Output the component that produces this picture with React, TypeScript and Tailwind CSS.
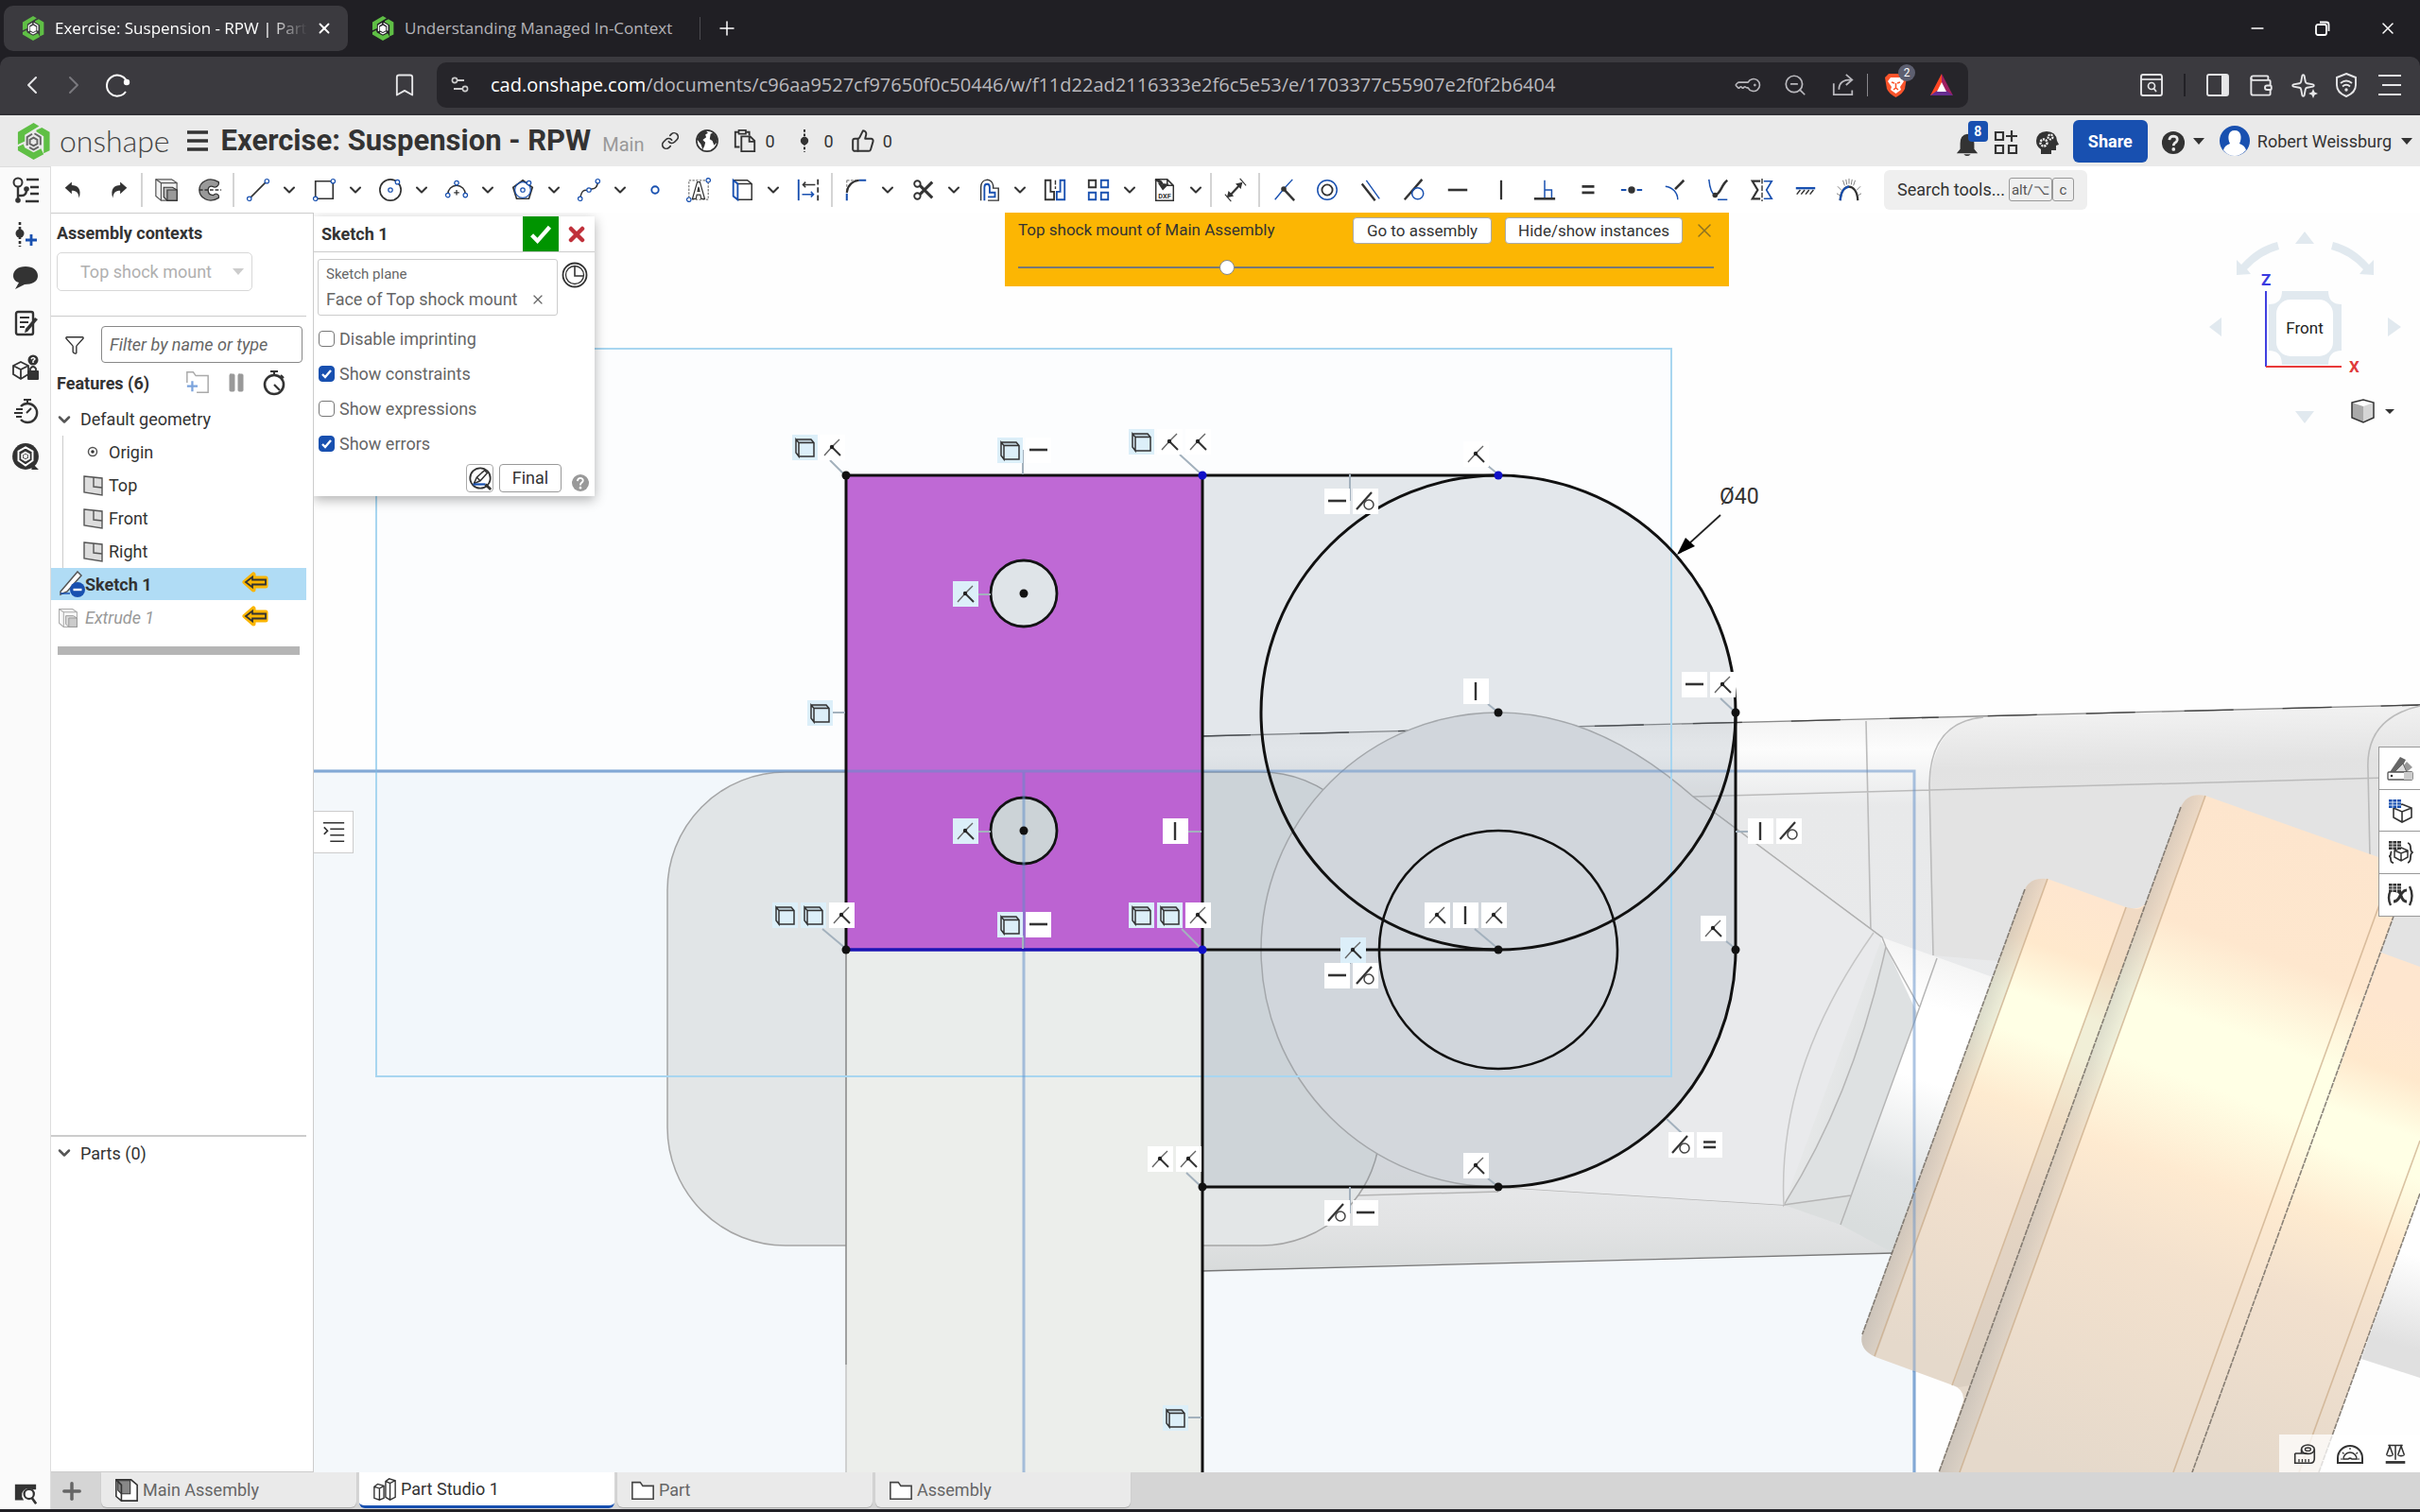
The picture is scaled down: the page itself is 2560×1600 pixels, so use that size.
import React from 'react';
import {
  Bookmark,
  ChevronDown,
  ChevronLeft,
  ChevronRight,
  Filter,
  KeyRound,
  Link as LinkIcon,
  Minus,
  Pause,
  Plus,
  Sparkle,
  ThumbsUp,
  Wallet,
  X,
  ZoomOut,
} from 'lucide-react';

const K = '#333333';
const B = '#1850b0';

const Svg: React.FC<{ s?: number; vb?: string; className?: string; children: React.ReactNode }> = ({
  s = 28,
  vb = '0 0 28 28',
  className,
  children,
}) => (
  <svg width={s} height={s} viewBox={vb} fill="none" className={className} aria-hidden="true">
    {children}
  </svg>
);

const Dot = ({ x, y }: { x: number; y: number }) => (
  <circle cx={x} cy={y} r="2.4" fill="#fff" stroke={B} strokeWidth="1.3" />
);

const Logo = ({ s = 24, inner = '#666' }: { s?: number; inner?: string }) => (
  <Svg s={s} vb="0 0 40 40">
    <path d="M20 0 L26 3.500 L10.500 13 V20 L3 23.500 V10 Z" fill="#5fbf45" />
    <path d="M29 5 L37.500 10 V30 L31 33 V14.500 L23 9.500 V8 Z" fill="#5fbf45" />
    <path d="M3 26 L9 23 L10.500 27 L20 32 L28 28 L31 34 L20 40 L3 30 Z" fill="#5fbf45" />
    <path
      d="M21 11.500 L27.500 15.500 V24 M25.500 26 L20 29 L15.500 26.500 M13 24.500 V15.500 L18.500 12"
      stroke={inner}
      strokeWidth="2"
    />
    <path d="M20 16 L24 18.300 V22.700 L20 25 L16 22.700 V18.300 Z" stroke={inner} strokeWidth="2" fill={inner === '#fff' ? '#fff' : 'none'} />
  </Svg>
);

const Caret = ({ className = 'text-[#333]' }: { className?: string }) => (
  <svg width="12" height="7" viewBox="0 0 12 7" className={className} aria-hidden="true">
    <path d="M0 0 H12 L6 7 Z" fill="currentColor" />
  </svg>
);

const icons: Record<string, React.ReactNode> = {
  undo: <path d="M1 11 L11 2 V7 C20 7 26 13 22 26 C21 18 18 15 11 15 V20 Z" fill={K} />,
  redo: <path d="M27 11 L17 2 V7 C8 7 2 13 6 26 C7 18 10 15 17 15 V20 Z" fill={K} />,
  extrude: (
    <>
      <path d="M2 2 H20 L26 6 V26 H8 L2 21 Z" fill="#f2f2f2" stroke="#555" strokeWidth="1.300" />
      <path d="M2 2 L8 6 H26 M8 6 V26" stroke="#555" strokeWidth="1.300" />
      <path d="M11 11 H21 L26 14 V26 H15 L11 22 Z" fill="#bbb" stroke={K} strokeWidth="1.200" />
      <path d="M15 14 H26 V26 H15 Z" fill="#999" stroke={K} strokeWidth="1.200" />
    </>
  ),
  revolve: (
    <>
      <path
        d="M24 5 C13 -2 2 5 2 14 C2 23 13 30 24 23 C25 19 21 17 18 20 C13 20 12 17 12 14 C12 11 14 9 17 10 C20 12 25 10 24 5 Z"
        fill="#999"
        stroke={K}
        strokeWidth="1.400"
      />
      <path d="M2 14 H27" stroke={K} strokeWidth="1.500" strokeDasharray="4 2" />
    </>
  ),
  line: (
    <>
      <path d="M5 23 L23 5" stroke={K} strokeWidth="1.800" />
      <Dot x={4} y={24} />
      <Dot x={24} y={4} />
    </>
  ),
  rect: (
    <>
      <path d="M4 4 H24 V24 H4 Z" stroke={K} strokeWidth="1.800" />
      <Dot x={4} y={24} />
      <Dot x={24} y={4} />
    </>
  ),
  circle: (
    <>
      <circle cx="14" cy="14" r="12" stroke={K} strokeWidth="1.800" />
      <Dot x={14} y={14} />
      <Dot x={22} y={5} />
    </>
  ),
  arc: (
    <>
      <path d="M4 19 A10 10 0 0 1 24 19" stroke={K} strokeWidth="1.600" />
      <path d="M14 14 V20 M11 17 H17" stroke={K} strokeWidth="1.400" />
      <Dot x={14} y={6} />
      <Dot x={4} y={20} />
      <Dot x={24} y={20} />
    </>
  ),
  polygon: (
    <>
      <path d="M14 3 L25 11 L21 24 H7 L3 11 Z" stroke={K} strokeWidth="1.800" />
      <circle cx="14" cy="14" r="9" stroke={B} strokeWidth="1.300" />
      <Dot x={14} y={14} />
      <Dot x={21} y={6} />
    </>
  ),
  spline: (
    <>
      <path d="M4 24 C6 10 12 16 14 14 C18 12 24 14 24 4" stroke={K} strokeWidth="1.600" />
      <Dot x={4} y={24} />
      <Dot x={14} y={14} />
      <Dot x={24} y={4} />
    </>
  ),
  point: <circle cx="14" cy="14" r="4" stroke={B} strokeWidth="2" />,
  text: (
    <>
      <path d="M3 3 H25 V25 H3 Z" stroke="#777" strokeWidth="1.300" strokeDasharray="2.500 1.500" />
      <path
        d="M7 24 L12.500 5 H15.500 L21 24 H17 L16 19.500 H12 L11 24 Z M13 15.500 H15 L14 10.500 Z"
        stroke={K}
        strokeWidth="1.300"
      />
      <Dot x={25} y={3} />
      <Dot x={3} y={25} />
    </>
  ),
  use: (
    <>
      <path d="M4 3 H20 L25 7 V25 H9 L4 21 Z M9 7 H25 M4 3 L9 7" stroke={K} strokeWidth="1.600" />
      <path d="M4 3 L9 7 V25 L4 21 Z" stroke={B} strokeWidth="2" fill="#fff" />
    </>
  ),
  construct: (
    <>
      <path d="M3 2 V26" stroke={B} strokeWidth="2" />
      <path d="M25 2 V8 M25 11 V17 M25 20 V26" stroke={K} strokeWidth="2" />
      <path d="M8 8 H22 M11 5 L8 8 L11 11" stroke={K} strokeWidth="1.600" />
      <path d="M7 19 H20 M17 16 L20 19 L17 22" stroke={B} strokeWidth="1.600" />
    </>
  ),
  fillet: (
    <>
      <path d="M3 3 H14 M3 3 V14" stroke="#888" strokeWidth="1.300" strokeDasharray="3 1.500" />
      <path d="M3 17 C4 9 9 4 17 3" stroke={K} strokeWidth="2.300" />
      <path d="M17 3 H25 M3 18 V26" stroke={B} strokeWidth="2.200" />
    </>
  ),
  trim: (
    <>
      <circle cx="8" cy="7" r="3.500" stroke={K} strokeWidth="2" />
      <circle cx="8" cy="21" r="3.500" stroke={K} strokeWidth="2" />
      <path d="M11 9 L25 23 M11 19 L25 5" stroke={K} strokeWidth="3.200" />
    </>
  ),
  offset: (
    <>
      <path d="M5 26 V11 C5 0 18 0 19 9 V12 H25 V26 H13" stroke={K} strokeWidth="1.500" />
      <path d="M9 26 V11 C9 6 15 6 15 11 V17 H21 V22 H13" stroke={B} strokeWidth="2" />
    </>
  ),
  mirror: (
    <>
      <path d="M3 3 H9 V16 H13 V25 H3 Z" stroke={K} strokeWidth="2" />
      <path d="M25 3 H20 V16 H16 V25 H25 Z" stroke={B} strokeWidth="2" />
      <path d="M14.500 3 V13" stroke={K} strokeWidth="1.500" strokeDasharray="5 2" />
    </>
  ),
  pattern: (
    <>
      <path d="M3 3 H11 V11 H3 Z" stroke={K} strokeWidth="2" />
      <path d="M17 3 H25 V11 H17 Z M3 17 H11 V25 H3 Z M17 17 H25 V25 H17 Z" stroke={B} strokeWidth="2" />
    </>
  ),
  dxf: (
    <>
      <path d="M4 2 H17 L24 9 V26 H4 Z M17 2 V9 H24" stroke={K} strokeWidth="1.600" />
      <path d="M3 3 C9 2 12 5 12 9 M8 7 L12 13 L17 8 Z" stroke={K} strokeWidth="1.800" fill={K} />
      <text x="14" y="23.500" textAnchor="middle" fontSize="8" fontWeight="700" fill={K} fontFamily="Roboto, sans-serif">
        DXF
      </text>
    </>
  ),
  dimension: (
    <>
      <path d="M8 20 L19 8" stroke={K} strokeWidth="2.400" />
      <path d="M4 23 L6 15 L12 21 Z M22 5 L20 13 L14 7 Z" fill={K} />
      <path d="M2 19 L9 27 M19 1 L26 9" stroke={K} strokeWidth="1.200" />
    </>
  ),
  coincident: (
    <>
      <path d="M24 2 L14 13 L4 25" stroke={B} strokeWidth="1.500" />
      <path d="M14 13 L26 26" stroke={K} strokeWidth="2.600" />
      <circle cx="14" cy="13" r="3" fill={K} />
    </>
  ),
  concentric: (
    <>
      <circle cx="14" cy="14" r="11" stroke={B} strokeWidth="1.600" />
      <circle cx="14" cy="14" r="6" stroke={K} strokeWidth="2" />
    </>
  ),
  parallel: (
    <>
      <path d="M9 3 L24 24" stroke={B} strokeWidth="1.500" />
      <path d="M4 7 L19 26" stroke={K} strokeWidth="2.600" />
    </>
  ),
  tangent: (
    <>
      <path d="M3 25 L23 2" stroke={K} strokeWidth="2.600" />
      <circle cx="18" cy="18" r="6.500" stroke={B} strokeWidth="1.600" />
    </>
  ),
  horizontal: <path d="M3 14 H25" stroke={K} strokeWidth="2.800" />,
  vertical: <path d="M14 3 V25" stroke={K} strokeWidth="2.400" />,
  perpendicular: (
    <>
      <path d="M14 3 V24 M14 14 H22 V24" stroke={B} strokeWidth="1.600" />
      <path d="M2 24 H26" stroke={K} strokeWidth="2.800" />
    </>
  ),
  equal: <path d="M7 10 H21 M7 17 H21" stroke={K} strokeWidth="3" />,
  midpoint: (
    <>
      <path d="M2 14 H8 M20 14 H26" stroke={B} strokeWidth="2" />
      <circle cx="14" cy="14" r="4" fill={K} />
    </>
  ),
  normal: (
    <>
      <path d="M3 10 C11 11 17 17 17 25" stroke={B} strokeWidth="1.600" />
      <path d="M14 13 L24 3" stroke={K} strokeWidth="2.800" />
    </>
  ),
  pierce: (
    <>
      <path d="M3 2 C4 12 6 18 10 20 M13 25 H24" stroke={B} strokeWidth="1.600" />
      <path d="M10 20 C17 18 17 8 24 3" stroke={K} strokeWidth="2.800" />
      <circle cx="10" cy="20" r="3" fill={K} />
    </>
  ),
  symmetric: (
    <>
      <path d="M12 4 H3 L9 14 L3 24 H12" stroke={K} strokeWidth="2.400" />
      <path d="M16 4 H25 L19 14 L25 24 H16" stroke={B} strokeWidth="1.800" />
      <path d="M14 1 V27" stroke={K} strokeWidth="1.500" strokeDasharray="6 2" />
    </>
  ),
  fix: (
    <>
      <path d="M3 12 H25" stroke={B} strokeWidth="2.600" />
      <path d="M8 14 L4 19 M13 14 L9 19 M18 14 L14 19 M23 14 L19 19" stroke={K} strokeWidth="1.600" />
    </>
  ),
  curvature: (
    <>
      <path d="M4 26 C5 5 23 5 24 26" stroke={K} strokeWidth="2.400" />
      <path d="M4 26 C5 14 9 11 14 10" stroke={B} strokeWidth="2.400" />
      <path
        d="M14 7 V1 M9 9 L7 3 M19 9 L21 3 M5 14 L1 10 M23 14 L27 10 M3 20 L0 18 M25 20 L28 18 M11.500 8 L10.500 2 M16.500 8 L17.500 2"
        stroke="#777"
        strokeWidth="1"
      />
    </>
  ),
};

type Tool = { id: string; menu?: boolean };

const toolGroups: Tool[][] = [
  [{ id: 'extrude' }, { id: 'revolve' }],
  [
    { id: 'line', menu: true },
    { id: 'rect', menu: true },
    { id: 'circle', menu: true },
    { id: 'arc', menu: true },
    { id: 'polygon', menu: true },
    { id: 'spline', menu: true },
    { id: 'point' },
    { id: 'text' },
    { id: 'use', menu: true },
    { id: 'construct' },
  ],
  [
    { id: 'fillet', menu: true },
    { id: 'trim', menu: true },
    { id: 'offset', menu: true },
    { id: 'mirror' },
    { id: 'pattern', menu: true },
    { id: 'dxf', menu: true },
  ],
  [{ id: 'dimension' }],
  [
    { id: 'coincident' },
    { id: 'concentric' },
    { id: 'parallel' },
    { id: 'tangent' },
    { id: 'horizontal' },
    { id: 'vertical' },
    { id: 'perpendicular' },
    { id: 'equal' },
    { id: 'midpoint' },
    { id: 'normal' },
    { id: 'pierce' },
    { id: 'symmetric' },
    { id: 'fix' },
    { id: 'curvature' },
  ],
];

/* ---------- browser chrome ---------- */

const BrowserTabs = () => (
  <div className="flex h-[60px] shrink-0 items-center bg-[#201f24] pl-1 font-['Open_Sans',sans-serif] text-[17px] text-white">
    <div className="flex h-12 w-[364px] items-center rounded-[10px] bg-[#3b3a3f] pl-[18px] pr-4">
      <Logo s={26} inner="#fff" />
      <span className="ml-2.5 whitespace-nowrap [mask-image:linear-gradient(to_right,black_85%,transparent)]">
        Exercise: Suspension - RPW | Part
      </span>
      <button aria-label="Close tab" className="ml-auto">
        <X size={18} strokeWidth={2.5} />
      </button>
    </div>
    <div className="flex h-12 w-[372px] items-center pl-6">
      <Logo s={26} inner="#fff" />
      <span className="ml-2.5 whitespace-nowrap text-[#b4b3b8]">Understanding Managed In-Context</span>
    </div>
    <div className="h-6 w-px bg-[#4c4b50]" />
    <button aria-label="New tab" className="ml-4">
      <Plus size={24} strokeWidth={1.5} />
    </button>
    <div className="ml-auto flex items-center gap-[50px] pr-6">
      <button aria-label="Minimize">
        <Minus size={20} strokeWidth={2} />
      </button>
      <button aria-label="Restore">
        <Svg s={18} vb="0 0 18 18">
          <rect x="2" y="5" width="11" height="11" rx="2" stroke="#fff" strokeWidth="1.800" />
          <path d="M6 2.500 H13 Q15.500 2.500 15.500 5 V12" stroke="#fff" strokeWidth="1.800" />
        </Svg>
      </button>
      <button aria-label="Close window">
        <X size={20} strokeWidth={1.8} />
      </button>
    </div>
  </div>
);

const BrowserBar = () => (
  <div className="bg-[#201f24]">
    <div className="flex h-[62px] shrink-0 items-center rounded-t-[10px] border-b-2 border-[#323136] bg-[#3b3a3f] pl-[18px] pr-[18px] text-[#e6e6e8]">
      <button aria-label="Back">
        <ChevronLeft size={32} strokeWidth={1.5} />
      </button>
      <button aria-label="Forward" className="ml-3 text-[#7a797e]">
        <ChevronRight size={32} strokeWidth={1.5} />
      </button>
      <button aria-label="Reload" className="ml-4">
        <Svg s={28}>
          <path d="M24 10 A11 11 0 1 0 23 21" stroke="#fff" strokeWidth="2" />
          <circle cx="24" cy="11" r="3.200" fill="#fff" />
        </Svg>
      </button>
      <button aria-label="Bookmark" className="ml-[276px]">
        <Bookmark size={28} strokeWidth={1.6} />
      </button>
      <div className="ml-5 flex h-12 w-[1620px] items-center rounded-[10px] bg-[#26252a] pl-[14px] pr-[14px]">
        <Svg s={22} vb="0 0 22 22">
          <circle cx="5" cy="6" r="2.600" stroke="#ccc" strokeWidth="1.600" />
          <circle cx="16" cy="15" r="2.600" stroke="#ccc" strokeWidth="1.600" />
          <path d="M8 6 H15 M4 15 H13" stroke="#ccc" strokeWidth="1.800" />
        </Svg>
        <span className="ml-[21px] whitespace-nowrap font-['Open_Sans',sans-serif] text-[20px] text-[#b9b8bd]">
          <span className="text-white">cad.onshape.com</span>
          /documents/c96aa9527cf97650f0c50446/w/f11d22ad2116333e2f6c5e53/e/1703377c55907e2f0f2b6404
        </span>
        <div className="ml-auto flex items-center text-[#b9b8bd]">
          <KeyRound size={24} strokeWidth={1.6} className="rotate-45" />
          <ZoomOut size={26} strokeWidth={1.6} className="ml-6" />
          <Svg s={26} className="ml-[25px]">
            <path d="M3 12 V25 H24 V20" stroke="#b9b8bd" strokeWidth="1.900" />
            <path d="M9 19 C9 11 14 8 23 8 M17 2 L24 8 L17 14" stroke="#b9b8bd" strokeWidth="1.900" />
          </Svg>
          <div className="ml-3 h-6 w-px bg-[#88878c]" />
          <div className="relative ml-4">
            <Svg s={28}>
              <path d="M6 2 H20 L25 6 L23 18 Q21 23 13.500 27 Q6 23 4 18 L2 6 Z" fill="#fb542b" />
              <path d="M8 6 H19 L22 10 L18 16 L19 19 L13.500 23 L8 19 L9 16 L5 10 Z" fill="#fff" />
              <path d="M9 11 L12 12 M18 11 L15 12 M13.500 12 V17 M11 19 L13.500 17 L16 19" stroke="#fb542b" strokeWidth="1.600" />
            </Svg>
            <span className="absolute -top-2 left-4 grid h-[18px] w-[18px] place-items-center rounded-full bg-[#5d5f70] text-xs text-white">
              2
            </span>
          </div>
          <Svg s={28} className="ml-5">
            <path d="M14 2 L2 25 H9 L14 14 Z" fill="#ff4724" />
            <path d="M14 2 L26 25 L19 22 L14 12 Z" fill="#9e1f63" />
            <path d="M2 25 L9 20 H19 L26 25 Z" fill="#662d91" />
            <path d="M14 11 L19 21 H9 Z" fill="#fff" />
          </Svg>
        </div>
      </div>
      <div className="ml-auto flex items-center gap-[18px]">
        <Svg s={28}>
          <rect x="3" y="3" width="22" height="22" rx="2" stroke="#e6e6e8" strokeWidth="1.900" />
          <path d="M3 8 H25" stroke="#e6e6e8" strokeWidth="1.700" />
          <circle cx="14" cy="15" r="3.500" stroke="#e6e6e8" strokeWidth="1.700" />
          <path d="M16 17 L19 21" stroke="#e6e6e8" strokeWidth="1.700" />
        </Svg>
        <div className="mx-0.5 h-6 w-0.5 bg-[#222126]" />
        <Svg s={28}>
          <rect x="3" y="3" width="22" height="22" rx="2" stroke="#e6e6e8" strokeWidth="1.900" />
          <path d="M18 3 H25 V25 H18 Z" fill="#e6e6e8" />
        </Svg>
        <Wallet size={27} strokeWidth={1.7} />
        <div className="relative">
          <Sparkle size={27} strokeWidth={1.7} />
          <Svg s={10} vb="0 0 10 10" className="absolute -right-0.5 bottom-0">
            <path d="M5 0 L6.500 3.500 L10 5 L6.500 6.500 L5 10 L3.500 6.500 L0 5 L3.500 3.500 Z" fill="#e6e6e8" />
          </Svg>
        </div>
        <Svg s={28}>
          <path d="M14 2 L24 6 V14 Q24 22 14 26 Q4 22 4 14 V6 Z" stroke="#e6e6e8" strokeWidth="1.900" />
          <path d="M8 12 Q14 7 20 12 M10 15.500 Q14 12 18 15.500" stroke="#e6e6e8" strokeWidth="1.900" />
          <circle cx="14" cy="19" r="1.700" fill="#e6e6e8" />
        </Svg>
        <Svg s={28}>
          <path d="M2 4 H26 M6 14 H26 M2 24 H26" stroke="#e6e6e8" strokeWidth="2" />
        </Svg>
      </div>
    </div>
  </div>
);

/* ---------- app header ---------- */

const AppHeader = () => (
  <header className="flex h-[54px] shrink-0 items-center bg-[#eaeaea] pl-4 pr-2 text-[18px] text-[#333]">
    <Logo s={39} />
    <span className="ml-2 font-['Lato',sans-serif] text-[32px] font-light leading-9 text-[#444]">onshape</span>
    <button aria-label="Menu" className="ml-[18px]">
      <Svg s={24} vb="0 0 24 24">
        <path d="M1 3 H23 M1 12 H23 M1 21 H23" stroke={K} strokeWidth="3.600" />
      </Svg>
    </button>
    <h1 className="ml-3 whitespace-nowrap text-[31px] font-bold">Exercise: Suspension - RPW</h1>
    <span className="ml-3 mt-2 text-[20px] text-[#999]">Main</span>
    <LinkIcon size={20} strokeWidth={2} className="ml-[18px]" />
    <Svg s={26} className="ml-4">
      <circle cx="14" cy="14" r="12" fill="#fff" stroke={K} strokeWidth="1.800" />
      <path d="M4 7 Q8 2 13 3 L15 5 L12 7 L13 10 L9 13 L12 16 L11 20 L9 24 L7 18 L3 13 Z M18 6 L21 5 L25 10 V16 L22 19 L20 14 L17 12 Z" fill={K} />
    </Svg>
    <Svg s={26} className="ml-[14px]">
      <path d="M8 21 H3 V4 H19 V8" stroke={K} strokeWidth="2" />
      <path d="M7 2 H15 V6 H7 Z" fill="#eaeaea" stroke={K} strokeWidth="1.800" />
      <path d="M10 9 H20 L25 14 V26 H10 Z M19 9 V15 H25" fill="#eaeaea" stroke={K} strokeWidth="2" />
    </Svg>
    <span className="ml-2">0</span>
    <Svg s={26} className="ml-[18px]">
      <path d="M14 1 V27" stroke={K} strokeWidth="2.200" strokeDasharray="3 2" />
      <circle cx="14" cy="14" r="4.500" fill={K} />
    </Svg>
    <span className="ml-2">0</span>
    <ThumbsUp size={26} strokeWidth={1.8} className="ml-[18px]" />
    <span className="ml-2">0</span>

    <div className="ml-auto flex items-center">
      <div className="relative mt-2">
        <Svg s={26}>
          <path d="M14 2 Q6 3 6 13 V19 L2 24 H26 L22 19 V13 Q22 3 14 2 Z M10 25 H18 Q14 29 10 25 Z" fill={K} />
        </Svg>
        <span className="absolute -top-3 left-[14px] grid h-[22px] w-[21px] place-items-center rounded-[4px] bg-[#1850b0] text-[14px] font-bold text-white">
          8
        </span>
      </div>
      <Svg s={28} className="ml-[14px] mt-1">
        <path d="M3 3 H11 V11 H3 Z M3 17 H11 V25 H3 Z M17 17 H25 V25 H17 Z M20 1 V13 M14 7 H26" stroke={K} strokeWidth="2.200" />
      </Svg>
      <Svg s={28} className="ml-[15px] mt-1">
        <path d="M8 26 V21 Q3 18 3 12 Q4 2 14 2 Q24 2 25 12 L27 16 L24 17 V22 H19 V26 Z" fill={K} />
        <circle cx="11" cy="14" r="3.500" stroke="#fff" strokeWidth="2.400" strokeDasharray="2 1" />
        <circle cx="18" cy="8" r="2.500" stroke="#fff" strokeWidth="2" strokeDasharray="2 1" />
      </Svg>
      <button className="ml-[14px] h-[45px] w-[79px] rounded-[6px] bg-[#1850b0] text-[18px] font-bold text-white">Share</button>
      <Svg s={26} className="ml-[14px] mr-2 mt-1">
        <circle cx="14" cy="14" r="13" fill={K} />
        <path d="M9.500 11 Q10 6.500 14.300 6.500 Q19 7 18.500 11 Q18 13 15.500 14.500 Q14.300 15.500 14.300 17.500" stroke="#eaeaea" strokeWidth="3" />
        <circle cx="14.300" cy="21.500" r="2" fill="#eaeaea" />
      </Svg>
      <Caret />
      <Svg s={32} vb="0 0 32 32" className="ml-4">
        <circle cx="16" cy="16" r="16" fill={B} />
        <path d="M16 5 C23 5 24 13 21 19 Q27 21 28 26 Q22 32 16 32 Q9 32 4 26 Q5 21 11 19 C8 13 9 5 16 5 Z" fill="#fff" />
      </Svg>
      <span className="ml-2 mr-[10px] whitespace-nowrap">Robert Weissburg</span>
      <Caret />
    </div>
  </header>
);

const SketchToolbar = () => (
  <div className="flex h-[49px] shrink-0 items-center bg-white">
    {['undo', 'redo'].map((id) => (
      <button key={id} aria-label={id} className="grid w-[47px] place-items-center">
        <Svg s={20}>{icons[id]}</Svg>
      </button>
    ))}
    {toolGroups.map((group, i) => (
      <React.Fragment key={i}>
        <div className="ml-px mr-0.5 h-9 w-0.5 shrink-0 bg-[#d4d4d4]" />
        {group.map((tool) => (
          <React.Fragment key={tool.id}>
            <button aria-label={tool.id} className="grid w-[46px] shrink-0 place-items-center">
              <Svg s={26}>{icons[tool.id]}</Svg>
            </button>
            {tool.menu && (
              <button aria-label={`${tool.id} options`} className="grid w-6 shrink-0 place-items-center pr-1 text-[#333]">
                <ChevronDown size={20} strokeWidth={2.5} />
              </button>
            )}
          </React.Fragment>
        ))}
      </React.Fragment>
    ))}
    <button className="ml-[14px] flex h-[42px] items-center rounded-[6px] bg-[#efefef] px-[14px] text-[18px] text-[#333]">
      <span className="whitespace-nowrap">Search tools...</span>
      <span className="ml-1 h-[25px] rounded-[3px] border border-[#999] px-0.5 text-[15px] leading-6 text-[#555]">alt/⌥</span>
      <span className="h-[25px] w-[23px] rounded-[3px] border border-[#999] text-[15px] leading-6 text-[#555]">c</span>
    </button>
  </div>
);

/* ---------- left side ---------- */

const SideRail = () => (
  <nav className="flex w-[54px] shrink-0 flex-col items-center border-r border-t border-[#ddd] bg-[#fafafa]">
    <button aria-label="Feature list" className="mt-[9px] h-[30px]">
      <Svg s={28}>
        <circle cx="6" cy="6" r="4.500" stroke={K} strokeWidth="2" />
        <path d="M6 11 V24 M6 20 H10 Q15 20 15 14 M15 3 H28 M19 11 H28 M19 18 H28 M14 26 H28" stroke={K} strokeWidth="2.400" />
        <circle cx="6" cy="25" r="2.800" fill={K} />
        <circle cx="15" cy="13" r="2.800" fill={K} />
      </Svg>
    </button>
    <button aria-label="Versions" className="mt-[17px] h-[30px]">
      <Svg s={28}>
        <path d="M8 1 V27" stroke={K} strokeWidth="2.600" strokeDasharray="3 2" />
        <circle cx="8" cy="13" r="4.500" fill={K} />
        <path d="M20 14 V26 M14 20 H26" stroke={B} strokeWidth="2.800" />
      </Svg>
    </button>
    <button aria-label="Comments" className="mt-[17px] h-[30px]">
      <Svg s={28}>
        <path d="M14 1 C22 1 27 5 27 11 C27 17 21 20 13 20 L3 25 L7 18 C3 17 1 14 1 11 C1 5 6 1 14 1 Z" fill={K} />
      </Svg>
    </button>
    <button aria-label="Notes" className="mt-[17px] h-[30px]">
      <Svg s={28}>
        <rect x="4" y="2" width="18" height="24" rx="2" stroke={K} strokeWidth="2.400" />
        <path d="M8 8 H18 M8 13 H17 M8 18 H13" stroke={K} strokeWidth="2" />
        <path d="M27 10 L16 23 L13 24 L14 20 L24 8 Z" fill={K} />
      </Svg>
    </button>
    <button aria-label="Part properties" className="mt-[17px] h-[30px]">
      <Svg s={28}>
        <path d="M9 8 L17 12 V21 L9 26 L1 21 V12 Z M1 12 L9 16 L17 12 M9 16 V26" stroke={K} strokeWidth="1.800" />
        <circle cx="22" cy="6" r="5.500" fill={K} />
        <path d="M20 5 Q22 2 24 5 L22 7 V9" stroke="#fff" strokeWidth="1.400" />
        <path d="M19 18 V15 Q22 11 25 15 V18" stroke={K} strokeWidth="1.800" />
        <rect x="16" y="17" width="12" height="10" rx="1" fill={K} />
      </Svg>
    </button>
    <button aria-label="Performance" className="mt-[17px] h-[30px]">
      <Svg s={28}>
        <path d="M9 8 A10 10 0 1 1 9 22" stroke={K} strokeWidth="2.400" />
        <path d="M12 1 H20 M16 1 V5 M15 15 L20 10 M4 11 H11 M2 15 H11 M4 19 H10" stroke={K} strokeWidth="2" />
      </Svg>
    </button>
    <button aria-label="AI advisor" className="mt-[17px] h-[30px]">
      <Svg s={30}>
        <circle cx="14" cy="14" r="13" fill={K} />
        <path d="M20 20 L27 27 H20 Z" fill={K} />
        <path d="M14 5 L21 9 V18 L14 23 L7 18 V9 Z M14 10 L17.500 12 V16 L14 18 L10.500 16 V12 Z" stroke="#fff" strokeWidth="1.800" />
        <circle cx="14" cy="14" r="2" fill="#fff" />
      </Svg>
    </button>
    <button aria-label="Search tabs" className="mb-[4px] mt-auto">
      <Svg s={26}>
        <path d="M2 4 H26 V10 H22 Q14 6 10 14 Q9 18 12 22 H2 Z" fill={K} />
        <circle cx="18" cy="15" r="5.500" stroke={K} strokeWidth="2.400" />
        <path d="M21 19 L26 26" stroke={K} strokeWidth="2.800" />
      </Svg>
    </button>
  </nav>
);

const PlaneIcon = () => (
  <Svg s={24} vb="0 0 24 24">
    <path d="M2 2 L21 4 V22 L2 19 Z" fill="#ddd" stroke="#555" strokeWidth="1.400" />
    <path d="M12 3 V13 L21 14" stroke="#555" strokeWidth="1.400" />
  </Svg>
);

const ContextArrow = () => (
  <Svg s={28} className="mb-1 ml-auto mr-10">
    <path d="M3 14 L12 6 V10 H25 V18 H12 V22 Z" stroke="#fbb500" strokeWidth="5" strokeLinejoin="round" fill="#fbb500" />
    <path d="M4 14 L11 8.500 V11.500 H25 V16.500 H11 V19.500 Z" stroke={K} strokeWidth="1.800" />
  </Svg>
);

const FeaturePanel = () => (
  <aside className="flex w-[278px] shrink-0 flex-col border-b border-r border-t border-[#ccc] bg-white text-[18px] text-[#333]">
    <div className="mr-[7px] flex h-[109px] flex-col border-b border-[#ccc] pl-[6px] pt-2">
      <label htmlFor="context" className="h-[26px] font-bold leading-[26px] text-[#333]">
        Assembly contexts
      </label>
      <div className="mt-[7px] grid w-[207px] items-center">
        <select
          id="context"
          disabled
          className="col-start-1 row-start-1 h-[41px] appearance-none rounded-[5px] border border-[#d8d8d8] bg-white pl-[24px] text-[#b0b0b0] opacity-100"
        >
          <option>Top shock mount</option>
        </select>
        <Caret className="col-start-1 row-start-1 mr-[9px] justify-self-end text-[#ccc]" />
      </div>
    </div>
    <div className="mt-[10px] flex items-center pl-[14px] pr-[11px]">
      <Filter size={22} strokeWidth={1.5} />
      <input
        aria-label="Filter features"
        placeholder="Filter by name or type"
        className="ml-auto h-[39px] w-[213px] rounded-[4px] border border-[#888] px-2 italic placeholder:text-[#666]"
      />
    </div>
    <div className="flex h-[42px] items-center pl-[6px]">
      <h2 className="w-[136px] font-bold">Features (6)</h2>
      <Svg s={26}>
        <path d="M13 25 H26 V6 H12 L9 2 H2 V14" stroke="#aaa" strokeWidth="1.600" />
        <path d="M8 12 V24 M2 18 H14" stroke="#7ba3dc" strokeWidth="2.400" />
      </Svg>
      <Pause size={24} className="ml-4 fill-[#999] text-[#999]" strokeWidth={1} />
      <Svg s={28} className="ml-[14px]">
        <circle cx="14" cy="16" r="10" stroke={K} strokeWidth="2.600" />
        <path d="M10 2 H18 M14 2 V6 M14 16 L20 22 M21 6 L24 9" stroke={K} strokeWidth="2.200" />
      </Svg>
    </div>
    <ul className="leading-[35px]">
      <li className="flex h-[35px] items-center pl-1">
        <ChevronDown size={20} strokeWidth={3} className="text-[#555]" />
        <span className="ml-[7px]">Default geometry</span>
      </li>
      <li className="ml-3 border-l border-[#ccc]">
        <ul>
          <li className="flex h-[35px] items-center pl-[20px]">
            <Svg s={24} vb="0 0 24 24">
              <circle cx="11" cy="11" r="4.500" stroke="#555" strokeWidth="1.500" />
              <circle cx="11" cy="11" r="1.800" fill={K} />
            </Svg>
            <span className="ml-1">Origin</span>
          </li>
          {['Top', 'Front', 'Right'].map((name) => (
            <li key={name} className="flex h-[35px] items-center pl-[20px]">
              <PlaneIcon />
              <span className="ml-1">{name}</span>
            </li>
          ))}
        </ul>
      </li>
      <li className="mr-[7px] flex h-[34px] items-center bg-[#b0dcf5] pl-2">
        <Svg s={28}>
          <path d="M2 22 L20 1 L24 5 L9 22 L2 25 Z" fill="#fff" stroke="#555" strokeWidth="1.500" />
          <path d="M2 24 H12" stroke={B} strokeWidth="1.500" />
          <circle cx="20" cy="20" r="8" fill={B} />
          <path d="M15.500 20 H24.500" stroke="#fff" strokeWidth="2.400" />
        </Svg>
        <span className="font-bold">Sketch 1</span>
        <ContextArrow />
      </li>
      <li className="mr-[7px] flex h-[37px] items-center pl-[7px] italic text-[#999]">
        <span className="opacity-50">
          <Svg s={22}>{icons.extrude}</Svg>
        </span>
        <span className="ml-[7px]">Extrude 1</span>
        <ContextArrow />
      </li>
    </ul>
    <div className="ml-[7px] mt-[12px] h-[9px] w-[256px] bg-[#b5b5b5]" />
    <div className="mb-[320px] mr-[7px] mt-auto flex h-[36px] items-center border-t-2 border-[#ccc] pl-1">
      <ChevronDown size={20} strokeWidth={3} className="text-[#555]" />
      <span className="ml-[7px]">Parts (0)</span>
    </div>
  </aside>
);

/* ---------- graphics area ---------- */

type Mark = 'cube' | 'coin' | 'horiz' | 'vert' | 'tan' | 'eq';

const markShapes: Record<Mark, React.ReactNode> = {
  cube: (
    <>
      <path d="M4 5 H20 L23 8.500 H7 Z" fill="#bccdd6" />
      <path d="M4 5 L7 8.500 V23 L4 19 Z M4 5 H20 L23 8.500 V23 H7 V8.500 H23" stroke="#333" strokeWidth="1.500" fill="none" />
    </>
  ),
  coin: (
    <>
      <path d="M21 5 L13 13 L5 22" stroke="#666" strokeWidth="1.400" fill="none" />
      <path d="M13 13 L22 22" stroke="#333" strokeWidth="2" />
      <circle cx="13" cy="13" r="2.200" fill="#222" />
    </>
  ),
  horiz: <path d="M4 13 H23" stroke="#333" strokeWidth="2.600" />,
  vert: <path d="M13 4 V23" stroke="#333" strokeWidth="2.400" />,
  tan: (
    <>
      <path d="M4 22 L20 4" stroke="#333" strokeWidth="2.200" />
      <circle cx="17" cy="17" r="5" stroke="#444" strokeWidth="1.500" fill="none" />
    </>
  ),
  eq: <path d="M7 10.500 H20 M7 16 H20" stroke="#333" strokeWidth="2.600" />,
};

const marks: [Mark, number, number, boolean?][] = [
  ['cube', 838, 460],
  ['coin', 867, 460],
  ['cube', 1055, 463],
  ['horiz', 1085, 463],
  ['cube', 1194, 454],
  ['coin', 1224, 454],
  ['coin', 1254, 454],
  ['coin', 1008, 615, true],
  ['coin', 1008, 866, true],
  ['cube', 854, 741],
  ['vert', 1230, 866],
  ['cube', 817, 955],
  ['cube', 847, 955],
  ['coin', 877, 955],
  ['cube', 1055, 965],
  ['horiz', 1085, 965],
  ['cube', 1194, 955],
  ['cube', 1224, 955],
  ['coin', 1254, 955],
  ['coin', 1548, 467],
  ['horiz', 1401, 517],
  ['tan', 1431, 517],
  ['vert', 1548, 718],
  ['horiz', 1779, 711],
  ['coin', 1809, 711],
  ['vert', 1849, 866],
  ['tan', 1879, 866],
  ['coin', 1507, 955],
  ['vert', 1537, 955],
  ['coin', 1567, 955],
  ['coin', 1799, 969],
  ['coin', 1418, 992, true],
  ['horiz', 1401, 1019],
  ['tan', 1431, 1019],
  ['coin', 1214, 1213],
  ['coin', 1244, 1213],
  ['coin', 1548, 1220],
  ['tan', 1401, 1270],
  ['horiz', 1431, 1270],
  ['tan', 1765, 1198],
  ['eq', 1795, 1198],
  ['cube', 1230, 1487],
];

const points: [number, number, string][] = [
  [895, 503, '#111'],
  [1272, 503, '#1010c8'],
  [1585, 503, '#1010c8'],
  [1083, 628, '#111'],
  [1083, 879, '#111'],
  [895, 1005, '#111'],
  [1272, 1005, '#1010c8'],
  [1585, 754, '#111'],
  [1836, 754, '#111'],
  [1585, 1005, '#111'],
  [1836, 1005, '#111'],
  [1272, 1256, '#111'],
  [1585, 1256, '#111'],
];

const Model = () => (
  <svg
    className="absolute inset-0 h-full w-full"
    viewBox="332 225 2228 1333"
    preserveAspectRatio="xMinYMin slice"
    role="img"
    aria-label="Sketch in context"
  >
    <defs>
      <linearGradient id="coilA" gradientUnits="userSpaceOnUse" x1="2333" y1="842" x2="2060" y2="1594">
        <stop offset="0.180" stopColor="#fee6cf" />
        <stop offset="0.260" stopColor="#ffe9cd" />
        <stop offset="0.330" stopColor="#ffffe5" />
        <stop offset="0.380" stopColor="#ffffe5" />
        <stop offset="0.470" stopColor="#feebd0" />
        <stop offset="0.580" stopColor="#f2e0cd" />
        <stop offset="0.820" stopColor="#e5d9cb" />
      </linearGradient>
      <linearGradient id="coilB" gradientUnits="userSpaceOnUse" x1="2333" y1="842" x2="2060" y2="1594">
        <stop offset="0" stopColor="#fde5cd" />
        <stop offset="0.170" stopColor="#fee7ce" />
        <stop offset="0.280" stopColor="#ffffe5" />
        <stop offset="0.360" stopColor="#ffffe5" />
        <stop offset="0.480" stopColor="#feead0" />
        <stop offset="0.600" stopColor="#f3e1cd" />
        <stop offset="0.900" stopColor="#e5d9cb" />
      </linearGradient>
      <linearGradient id="edge" gradientUnits="userSpaceOnUse" x1="2045" y1="1205" x2="2080" y2="1218">
        <stop offset="0" stopColor="#9a9a9a" stopOpacity="0.350" />
        <stop offset="1" stopColor="#9a9a9a" stopOpacity="0" />
      </linearGradient>
      <linearGradient id="edge2" gradientUnits="userSpaceOnUse" x1="2158" y1="1256" x2="2196" y2="1270">
        <stop offset="0" stopColor="#9a9a9a" stopOpacity="0.350" />
        <stop offset="1" stopColor="#9a9a9a" stopOpacity="0" />
      </linearGradient>
      <linearGradient id="armTop" x1="0" y1="0" x2="0" y2="1">
        <stop offset="0" stopColor="#efefef" />
        <stop offset="0.080" stopColor="#fcfcfc" />
        <stop offset="0.180" stopColor="#e8e9ea" />
        <stop offset="0.800" stopColor="#e9eaec" />
        <stop offset="0.920" stopColor="#e2e3e4" />
        <stop offset="1" stopColor="#d8dbdb" />
      </linearGradient>
      <linearGradient id="bossTop" gradientUnits="userSpaceOnUse" x1="2300" y1="750" x2="2302" y2="835">
        <stop offset="0" stopColor="#f2f2f2" />
        <stop offset="0.700" stopColor="#e2e2e2" />
        <stop offset="1" stopColor="#e3e3e3" />
      </linearGradient>
      <linearGradient id="shaft" gradientUnits="userSpaceOnUse" x1="2070" y1="1010" x2="1975" y2="1300">
        <stop offset="0" stopColor="#f3f3f3" />
        <stop offset="0.200" stopColor="#ffffff" />
        <stop offset="0.450" stopColor="#ffffff" />
        <stop offset="0.800" stopColor="#dfe2e3" />
        <stop offset="1" stopColor="#d9dddd" />
      </linearGradient>
      <linearGradient id="shaftR" gradientUnits="userSpaceOnUse" x1="2560" y1="1330" x2="2525" y2="1445">
        <stop offset="0" stopColor="#ffffff" />
        <stop offset="0.800" stopColor="#e0e0e0" />
        <stop offset="1" stopColor="#e0e0e0" />
      </linearGradient>
      <linearGradient id="cone" gradientUnits="userSpaceOnUse" x1="1895" y1="1150" x2="1970" y2="1175">
        <stop offset="0" stopColor="#eceded" />
        <stop offset="1" stopColor="#dde0e1" />
      </linearGradient>
    </defs>

    <rect x="332" y="225" width="2228" height="1333" fill="#fefefe" />
    <rect x="300" y="816" width="1725" height="800" fill="#f4f8fb" stroke="#a9c6e3" strokeWidth="3" />

    {/* linkage arm */}
    <path d="M1271 779 L2600 745 V1023 L2108 1034 L2003 1326 L1271 1345 Z" fill="url(#armTop)" />
    <path d="M2041 840 Q2042 764 2098 759 L2600 746 V1060 L2045 1011 Z" fill="url(#bossTop)" />
    <path d="M2041 836 L2560 822" stroke="#bbb" strokeWidth="1.500" />
    <path d="M1585 754 Q1690 754 1791 843 L1991 992 L1887 1275 L1585 1256 Z" fill="#eaebed" />
    <path d="M1271 779 L2560 746" stroke="#8a8a8a" strokeWidth="1.300" />
    <path d="M1271 779 L2560 746" stroke="#444" strokeWidth="1.300" strokeDasharray="52 52" />
    <path d="M1271 1345 L2003 1326" stroke="#777" strokeWidth="1.300" />
    <path
      d="M1791 843 L2041 836 M1974 763 L1979 986 M2098 759 Q2042 764 2041 830 L2045 1011 M2560 747 Q2502 760 2505 815 L2507 906"
      stroke="#bbb"
      strokeWidth="1.600"
      fill="none"
    />
    <path d="M1991 992 L2108 1034 L2003 1326 L1947 1296 L1958 1265 L1887 1275 L1940 1064 Z" fill="url(#shaft)" />
    <path d="M1982 987 Q1880 1130 1887 1275 Q1960 1160 1995 1002 Z" fill="url(#cone)" />
    <path d="M1995 1002 Q1960 1160 1887 1275 L1958 1265 L2028 1072 Z" fill="#dee1e2" />
    <path d="M1887 1275 L1958 1265 L1947 1296 Z" fill="#dbdede" />
    <path
      d="M1791 843 L1991 992 L1995 1002 L2030 1065 M1982 987 Q1880 1130 1887 1275 Q1960 1160 1995 1002 M2049 1014 L2026 1079 L1947 1296 M1887 1275 L1958 1265 M1585 1256 L1887 1275 M1437 1265 L1585 1261"
      stroke="#b5b5b5"
      strokeWidth="1.500"
      fill="none"
    />

    {/* rounded base plate */}
    <path
      d="M831 817 H1334 A126 126 0 0 1 1460 943 V1193 A126 126 0 0 1 1334 1318 H831 A125 125 0 0 1 706 1193 V943 A125 125 0 0 1 831 817 Z"
      fill="#e3e6e7"
      stroke="#a5a5a5"
      strokeWidth="1.500"
    />
    <path d="M1585 754 Q1690 754 1791 843 L1991 992 L1887 1275 L1585 1256 A251 251 0 0 1 1585 754 Z" fill="#e9eaec" />
    <path d="M1585 1256 A251 251 0 0 1 1585 754 Q1690 754 1791 843 L1991 992" fill="none" stroke="#b0b0b0" strokeWidth="1.500" />
    <path d="M1887 1275 Q1880 1130 1982 987" fill="none" stroke="#c5c5c5" strokeWidth="1.500" />

    {/* vertical post */}
    <rect x="895" y="1004" width="376" height="560" fill="#eceeeb" />
    <path d="M895 1004 V1444" stroke="#8c8c8c" strokeWidth="1.600" />
    <path d="M895 1444 V1558" stroke="#c8c8c8" strokeWidth="1.600" />

    {/* sketch regions */}
    <path
      d="M1271 502 H1585 A251 251 0 0 1 1836 753 V1004 A251 251 0 0 1 1585 1256 H1271 Z"
      fill="#697d8c"
      fillOpacity="0.170"
    />
    <rect x="895" y="502" width="376" height="502" fill="#c168d5" />
    <rect x="895" y="817" width="376" height="187" fill="#bd62d2" />
    <circle cx="1083" cy="628" r="35" fill="#e1e5e8" stroke="#111" strokeWidth="2.800" />
    <circle cx="1083" cy="879" r="35" fill="#ced4d7" stroke="#111" strokeWidth="2.800" />

    <rect x="398" y="369" width="1370" height="770" fill="#9fd4f5" fillOpacity="0.015" stroke="#a8d6f0" strokeWidth="2" />
    <path d="M332 816 H2025 V1558 M1083 816 V1558" fill="none" stroke="#5c8cc8" strokeOpacity="0.500" strokeWidth="3" />

    {/* spring */}
    <path
      d="M2142 941 Q2148 928 2166 930 L2249 960 Q2262 964 2270 956 L2280 1200 L2051 1558 L2077 1482 Q2078 1470 2066 1466 L1984 1436 Q1966 1428 1970 1412 Z"
      fill="url(#coilA)"
    />
    <path d="M2142 941 L1970 1412 Q1966 1428 1984 1436 L2166 930 Q2148 928 2142 941 Z" fill="url(#edge)" />
    <path d="M2519 1008 L2560 1023 V1263 L2453 1558 H2318 Z" fill="url(#coilA)" />
    <path d="M2560 1263 L2498 1438 L2560 1458 Z" fill="url(#shaftR)" />
    <path d="M2307 854 Q2314 838 2333 842 L2530 912 Q2548 920 2542 942 L2319 1558 H2051 Z" fill="url(#coilB)" />
    <path d="M2307 854 L2051 1558 H2073 L2333 842 Q2314 838 2307 854 Z" fill="url(#edge2)" />
    <path d="M2260 962 Q2266 962 2270 956 L2084 1466 L2072 1468 L2066 1466 L2249 960 Z" fill="#a59a90" fillOpacity="0.160" />
    <g fill="none" strokeWidth="1.600">
      <path
        d="M2166 930 L1983 1435 M2249 960 L2065 1466 M2333 842 L2073 1558 M2532 916 L2299 1558 M2560 1207 L2432 1558"
        stroke="#c9a986"
        strokeOpacity="0.700"
      />
      <path
        d="M2142 941 L1970 1412 M2307 854 L2051 1558 M2542 942 L2319 1558 M2560 1263 L2453 1558"
        stroke="#6d655d"
        strokeOpacity="0.800"
        strokeDasharray="6 1"
      />
    </g>
    <path d="M2025 1262 V1452" stroke="#5c8cc8" strokeOpacity="0.450" strokeWidth="3" />

    {/* sketch entities */}
    <g fill="none" stroke="#111" strokeWidth="3">
      <path d="M895 1005 V503 H1585 M1272 503 V1558 M1272 1005 H1585 M1272 1256 H1585 A251 251 0 0 0 1836 1005 V754" />
      <circle cx="1585" cy="754" r="251" />
      <circle cx="1585" cy="1005" r="126" strokeWidth="2.600" />
    </g>
    <path d="M895 1005 H1272" stroke="#1a14b4" strokeWidth="3.500" />

    <g stroke="#a3b1bd" strokeWidth="2">
      <path d="M878 487 L893 502 M1082 476 V502 M1248 481 L1271 502 M1035 629 H1048 M881 754 H894 M1035 880 H1048 M1257 880 H1271 M870 983 L895 1004 M1082 990 V1004 M1250 983 L1271 1004 M1574 493 L1585 502 M1428 502 V530 M1574 745 L1585 754 M1820 739 L1836 754 M1836 880 H1850 M1560 983 L1585 1004 M1826 996 L1836 1004 M1428 1004 V1020 M1255 1241 L1271 1256 M1574 1247 L1585 1256 M1428 1256 V1284 M1763 1184 L1779 1199 M1257 1500 H1271" />
    </g>

    {marks.map(([kind, x, y, tinted], i) => (
      <g key={i} transform={`translate(${x} ${y})`}>
        <rect width="27" height="27" fill={kind === 'cube' || tinted ? '#dceff9' : '#ffffff'} />
        {markShapes[kind]}
      </g>
    ))}

    {points.map(([x, y, fill], i) => (
      <circle key={i} cx={x} cy={y} r="4.500" fill={fill} />
    ))}

    <path d="M1820 545 L1776 585" stroke="#222" strokeWidth="1.800" />
    <path d="M1774 587 L1783 569 L1793 578 Z" fill="#000" />
    <text x="1819" y="533" fontSize="23" fill="#333" fontFamily="Roboto, sans-serif">
      Ø40
    </text>
  </svg>
);

const ViewCube = () => (
  <div className="absolute right-[14px] top-[14px]">
    <svg width="212" height="218" viewBox="2334 239 212 218" aria-hidden="true">
      <g fill="#e1e9ef">
        <path d="M2438 245 L2448 258 H2428 Z M2438 448 L2448 435 H2428 Z M2337 346 L2350 336 V356 Z M2540 346 L2526 336 V356 Z" />
        <path d="M2366 291 V275 L2371 280 Q2388 261 2409 256 L2411 264 Q2392 269 2377 285 L2381 290 Z" />
        <path d="M2511 291 V275 L2506 280 Q2489 261 2468 256 L2466 264 Q2485 269 2500 285 L2496 290 Z" />
        <path d="M2414 308 H2463 Q2463 322 2477 322 V371 Q2463 371 2463 386 H2414 Q2414 371 2400 371 V322 Q2414 322 2414 308 Z" />
      </g>
      <rect x="2408" y="317" width="60" height="60" rx="15" fill="#fff" />
      <path d="M2397 308 V388" stroke="#4040e0" strokeWidth="2" />
      <path d="M2397 388 H2477" stroke="#e83a3a" strokeWidth="2" />
      <g fontFamily="Roboto, sans-serif" fontSize="17">
        <text x="2392" y="302" fill="#3a3ae0" fontWeight="700">
          Z
        </text>
        <text x="2485" y="394" fill="#e03a3a" fontWeight="700">
          X
        </text>
        <text x="2438" y="353" fill="#222" textAnchor="middle">
          Front
        </text>
      </g>
      <path d="M2488 426 L2500 430 V447 L2488 442 Z" fill="#aaa" />
      <path d="M2500 430 L2511 426 V442 L2500 447 Z" fill="#d5d5d5" />
      <path d="M2488 426 L2500 423 L2511 426 V442 L2500 447 L2488 442 Z" fill="none" stroke={K} strokeWidth="1.500" />
      <path d="M2523 433 H2533 L2528 438 Z" fill={K} />
    </svg>
  </div>
);

const grid = (color: string) => (
  <>
    <path d="M2 2 H15 V11 H2 Z" fill={color} />
    <path d="M2 5 H15 M2 8 H15 M6 2 V11 M10.500 2 V11" stroke="#fff" strokeWidth="0.800" />
  </>
);

const RightPanel = () => (
  <div className="absolute right-0 top-[565px] flex w-11 flex-col border-l border-t border-[#999] bg-white">
    <button aria-label="Appearance" className="grid h-[45px] place-items-center border-b border-[#999]">
      <Svg s={28}>
        <path d="M3 18 L14 2 L20 5 L13 18 Z" fill="#666" />
        <path d="M12 18 L21 7 L27 13 L18 20 Z" fill="#999" />
        <path d="M8 18 L17 9 L21 18 Z" fill="#ddd" stroke="#666" />
        <rect x="1" y="18" width="26" height="8" rx="1" fill="#fff" stroke="#555" strokeWidth="1.300" />
        <path d="M18 18 H27 V26 H18 Z" fill="#ccc" />
        <circle cx="5" cy="22" r="1.300" fill={K} />
      </Svg>
    </button>
    <button aria-label="Configurations" className="grid h-[44px] place-items-center border-b border-[#999]">
      <Svg s={28}>
        <path d="M16 7 L26 11 V21 L16 26 L7 21 V11 Z M7 11 L16 15 L26 11 M16 15 V26" stroke={K} strokeWidth="1.600" />
        {grid(B)}
      </Svg>
    </button>
    <button aria-label="Configured features" className="grid h-[45px] place-items-center border-b border-[#999]">
      <Svg s={28}>
        <path d="M15 9 L22 12 V19 L15 23 L8 19 V12 Z M8 12 L15 15 L22 12 M15 15 V23" stroke={K} strokeWidth="1.500" />
        <path
          d="M5 13 Q4 14 4 16 Q4 18 2 18 Q4 18 4 21 Q4 25 7 25 M22 4 Q25 5 25 9 Q25 13 27 14 Q25 15 25 19 Q25 24 22 25"
          stroke={K}
          strokeWidth="1.800"
        />
        {grid(K)}
      </Svg>
    </button>
    <button aria-label="Variables" className="grid h-[45px] place-items-center border-b border-[#999]">
      <Svg s={28}>
        <path d="M4 9 Q0 17 4 25 M24 5 Q29 15 24 25" stroke={K} strokeWidth="2.400" />
        <path d="M9 10 Q13 9 15 15 Q17 21 21 21 M21 9 Q17 9 14 15 Q11 21 7 21" stroke={K} strokeWidth="3" />
        {grid(K)}
      </Svg>
    </button>
  </div>
);

const MeasureTools = () => (
  <div className="absolute bottom-0 right-0 flex h-10 w-[149px] items-center justify-between bg-white/75 pl-[15px] pr-[14px]">
    <Svg s={24}>
      <path d="M2 14 H17 M2 14 V26 H22 Q26 25 26 20 V9 M10 9 V14" stroke={K} strokeWidth="1.900" />
      <ellipse cx="18" cy="9" rx="8" ry="5.500" stroke={K} strokeWidth="1.900" />
      <ellipse cx="18" cy="9" rx="3.500" ry="2" stroke={K} strokeWidth="1.500" />
      <path d="M7 25 V21 M11 25 V21 M15 25 V21 M19 25 V21" stroke={K} strokeWidth="1.500" />
    </Svg>
    <Svg s={28}>
      <path d="M1 24 V19 A13 13 0 0 1 27 19 V24 Z" stroke={K} strokeWidth="2" />
      <path d="M7 20 A7 7 0 0 1 21 20 H16 A3 3 0 0 0 12 20 Z" stroke={K} strokeWidth="1.600" />
      <path d="M4 20 H6 M6 13 L7.500 14.500 M14 8 V10 M22 13 L20.500 14.500 M22 20 H24" stroke={K} strokeWidth="1.200" />
    </Svg>
    <Svg s={24}>
      <path d="M5 4 H23 M14 4 V22 M3 16 L7 5 L11 16 M17 16 L21 5 L25 16" stroke={K} strokeWidth="1.800" />
      <path d="M2 16 H12 Q7 20 2 16 Z M16 16 H26 Q21 20 16 16 Z" fill={K} />
      <path d="M2 25 H26" stroke={K} strokeWidth="3.200" />
    </Svg>
  </div>
);

const sketchOptions = [
  { id: 'imprint', label: 'Disable imprinting', on: false },
  { id: 'constraints', label: 'Show constraints', on: true },
  { id: 'expressions', label: 'Show expressions', on: false },
  { id: 'errors', label: 'Show errors', on: true },
];

const SketchDialog = () => (
  <section className="absolute left-0 top-1 w-[297px] bg-white text-[18px] text-[#666] shadow-[0_4px_12px_rgba(0,0,0,0.3)]">
    <div className="flex h-[38px] items-center border-b border-[#ccc] pl-2">
      <h2 className="font-bold text-[#333]">Sketch 1</h2>
      <button aria-label="Accept" className="ml-auto grid h-[37px] w-[38px] place-items-center bg-[#009400]">
        <Svg s={24}>
          <path d="M3 15 L10 22 L25 5" stroke="#fff" strokeWidth="5" />
        </Svg>
      </button>
      <button aria-label="Cancel" className="grid w-[38px] place-items-center text-[#c0303a]">
        <X size={24} strokeWidth={4.5} />
      </button>
    </div>
    <div className="flex pl-1 pt-[7px]">
      <div className="h-[60px] w-[254px] rounded-[3px] border border-[#ccc] pl-2">
        <div className="pt-1 text-[15px] leading-[22px]">Sketch plane</div>
        <div className="flex items-center leading-8">
          <span className="whitespace-nowrap">Face of Top shock mount</span>
          <button aria-label="Remove plane" className="ml-auto mr-3">
            <X size={16} strokeWidth={1.8} />
          </button>
        </div>
      </div>
      <button aria-label="Final button" className="ml-1 h-[34px]">
        <Svg s={28}>
          <circle cx="14" cy="14" r="12.500" stroke={K} strokeWidth="1.800" />
          <circle cx="14" cy="14" r="9.500" stroke={K} strokeWidth="1.300" />
          <path d="M14 5 V15 H23" stroke={K} strokeWidth="1.600" />
        </Svg>
      </button>
    </div>
    <div className="pt-[6px]">
      {sketchOptions.map((o) => (
        <div key={o.id} className="flex h-[37px] items-center pl-[5px]">
          <div className="grid place-items-center">
            <input
              id={o.id}
              type="checkbox"
              defaultChecked={o.on}
              className="peer col-start-1 row-start-1 h-[17px] w-[17px] appearance-none rounded-[4px] border border-[#777] bg-white checked:border-[#1850b0] checked:bg-[#1850b0]"
            />
            <svg
              width="13"
              height="13"
              viewBox="0 0 13 13"
              className="pointer-events-none invisible col-start-1 row-start-1 peer-checked:visible"
              aria-hidden="true"
            >
              <path d="M2 7 L5 10 L11 3" stroke="#fff" strokeWidth="2.400" fill="none" />
            </svg>
          </div>
          <label htmlFor={o.id} className="ml-[5px]">
            {o.label}
          </label>
        </div>
      ))}
    </div>
    <div className="flex h-[37px] items-start justify-end pr-[6px] pt-[3px]">
      <button aria-label="Sketch advisor" className="grid h-[30px] w-[29px] place-items-center rounded-[4px] border border-[#aaa]">
        <Svg s={26}>
          <circle cx="14" cy="14" r="11.500" stroke={K} strokeWidth="2" />
          <path d="M7 20 L10 13 L19 5 L22 8 L14 17 Z M10 13 L14 17" stroke={K} strokeWidth="1.600" />
          <path d="M6 21 H20" stroke={B} strokeWidth="2.400" />
          <path d="M20 21 L26 27" stroke={K} strokeWidth="3" />
        </Svg>
      </button>
      <button className="ml-[6px] h-[30px] w-[66px] rounded-[4px] border border-[#999] leading-7 text-[#333]">Final</button>
      <Svg s={18} className="ml-[11px] mt-[11px]">
        <circle cx="14" cy="14" r="14" fill="#999" />
        <path d="M9 11 Q10 6 14 6 Q19 7 18 11 Q17 13 15 14.500 Q14 15.500 14 18" stroke="#fff" strokeWidth="3" />
        <circle cx="14" cy="22" r="2" fill="#fff" />
      </Svg>
    </div>
  </section>
);

const ContextBar = () => (
  <div className="absolute left-[731px] top-0 h-[78px] w-[766px] bg-[#fcb603] px-[14px] text-[17px] text-[#333]">
    <div className="flex h-[38px] items-center">
      <label htmlFor="opacity" className="whitespace-nowrap">
        Top shock mount of Main Assembly
      </label>
      <button className="ml-auto h-[28px] w-[147px] whitespace-nowrap rounded-[4px] border border-[#aaa] bg-white leading-[26px]">
        Go to assembly
      </button>
      <button className="ml-[14px] h-[28px] w-[188px] whitespace-nowrap rounded-[4px] border border-[#aaa] bg-white leading-[26px]">
        Hide/show instances
      </button>
      <button aria-label="Close context" className="ml-[11px] text-[#8d7222]">
        <X size={24} strokeWidth={1.5} />
      </button>
    </div>
    <div className="flex h-10 items-center pr-0.5">
      <input
        id="opacity"
        type="range"
        min={0}
        max={1000}
        defaultValue={296}
        className="h-4 w-full appearance-none bg-transparent bg-[linear-gradient(#777,#777)] bg-[length:100%_2px] bg-center bg-no-repeat [&::-webkit-slider-thumb]:h-4 [&::-webkit-slider-thumb]:w-4 [&::-webkit-slider-thumb]:appearance-none [&::-webkit-slider-thumb]:rounded-full [&::-webkit-slider-thumb]:border [&::-webkit-slider-thumb]:border-[#888] [&::-webkit-slider-thumb]:bg-white"
      />
    </div>
  </div>
);

const FolderIcon = () => (
  <Svg s={26}>
    <path d="M2 5 H11 L14 9 H26 V24 H2 Z" fill="#fff" stroke="#444" strokeWidth="1.700" />
  </Svg>
);

const documentTabs = [
  {
    name: 'Main Assembly',
    icon: (
      <Svg s={26}>
        <path d="M2 2 H19 L26 8 V26 H8 L2 21 Z" fill="#fff" stroke={K} strokeWidth="1.700" />
        <path d="M4 3 H18 V18 H8 L4 14 Z" fill="#888" stroke={K} strokeWidth="1.200" />
        <path d="M2 2 L8 8 V26" stroke={K} strokeWidth="1.700" />
      </Svg>
    ),
  },
  {
    name: 'Part Studio 1',
    icon: (
      <Svg s={26}>
        <path
          d="M2 11 L6 8 L13 10 V24 L8 26 L2 24 Z M2 11 L8 13 L13 10 M8 13 V26 M15 5 L19 2 L26 4 V23 L20 26 L15 23 Z M15 5 L20 7 L26 4 M20 7 V26"
          fill="#fff"
          stroke={K}
          strokeWidth="1.500"
        />
      </Svg>
    ),
    active: true,
  },
  { name: 'Part', icon: <FolderIcon /> },
  { name: 'Assembly', icon: <FolderIcon /> },
];

const BottomTabs = () => (
  <div className="flex h-[39px] shrink-0 items-start bg-[#d5d5d5] text-[18px]">
    <button aria-label="Insert element" className="grid h-full w-[53px] place-items-center pr-[10px] text-[#666]">
      <Plus size={28} strokeWidth={3} />
    </button>
    {documentTabs.map((tab) => (
      <button
        key={tab.name}
        className={
          tab.active
            ? 'mr-[3px] flex h-[38px] w-[270px] items-center gap-1 rounded-b-[6px] border-b-[3px] border-[#1850b0] bg-white pl-[14px] text-[#333]'
            : 'mr-[3px] flex h-[37px] w-[270px] items-center gap-1 rounded-b-[6px] bg-[#eaeaea] pl-[14px] text-[#666] shadow-[0_1px_1px_rgba(0,0,0,0.2)]'
        }
      >
        {tab.icon}
        {tab.name}
      </button>
    ))}
  </div>
);

const App: React.FC = () => (
  <div className="flex h-screen flex-col overflow-hidden border-b-[3px] border-[#201f24] bg-white font-['Roboto',sans-serif]">
    <BrowserTabs />
    <BrowserBar />
    <AppHeader />
    <div className="flex min-h-0 flex-1">
      <SideRail />
      <div className="flex min-w-0 flex-1 flex-col">
        <SketchToolbar />
        <div className="flex min-h-0 flex-1">
          <FeaturePanel />
          <main className="relative min-w-0 flex-1 overflow-hidden">
            <Model />
            <SketchDialog />
            <ContextBar />
            <ViewCube />
            <button
              aria-label="Show feature list"
              className="absolute left-0 top-[633px] grid h-[45px] w-[42px] place-items-center border border-l-0 border-[#ccc] bg-white"
            >
              <Svg s={26}>
                <path d="M2 3 H26 M10 10 H26 M10 17 H26 M10 24 H26 M3 8 L7 12 L3 16" stroke={K} strokeWidth="1.700" />
              </Svg>
            </button>
            <RightPanel />
            <MeasureTools />
          </main>
        </div>
        <BottomTabs />
      </div>
    </div>
  </div>
);

export default App;
